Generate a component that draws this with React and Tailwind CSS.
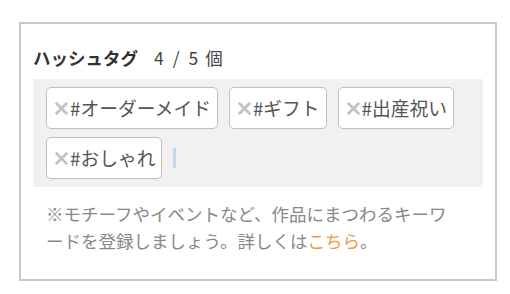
import React from "react";

const font = { fontFamily: '"Noto Sans CJK JP", "Noto Sans", sans-serif' };

function XIcon() {
  return (
    <svg width="13" height="13" viewBox="0 0 13 13" className="shrink-0">
      <path d="M0.8 0.8 L12.2 12.2 M12.2 0.8 L0.8 12.2" stroke="#c2c2c2" strokeWidth="2.8" strokeLinecap="butt" />
    </svg>
  );
}

function Tag({ label }) {
  return (
    <div className="h-[42px] pl-[8px] pr-[6px] flex items-center border border-[#bfbfbf] rounded-[5px] bg-white text-[18.75px] text-[#555] leading-none">
      <XIcon />
      <span className="ml-[2px]">{label}</span>
    </div>
  );
}

export default function App() {
  const tags = ["#オーダーメイド", "#ギフト", "#出産祝い", "#おしゃれ"];
  return (
    <div className="bg-white w-[510px] h-[294px] pt-[22px] pl-[19px]" style={font}>
      <div className="w-[478px] h-[259px] border-2 border-[#c8c8c8] px-[12px] pt-[22px]">
        <div className="flex items-center h-[24px] text-[17.5px] leading-[24px]">
          <span className="font-bold text-[#333]">ハッシュタグ</span>
          <span className="ml-[16px] text-[#444]">4</span>
          <span className="ml-[9px] text-[#444]">/</span>
          <span className="ml-[9px] text-[#444]">5</span>
          <span className="ml-[7px] text-[#444]">個</span>
        </div>
        <div className="mt-[9px] bg-[#f2f1ef] px-[13px] py-[8px] flex flex-wrap items-center gap-x-[11px] gap-y-[8px]">
          {tags.map((t) => (
            <Tag key={t} label={t} />
          ))}
          <div className="w-[3px] h-[20px] bg-[#c4d8f0]" />
        </div>
        <p className="mt-[13px] pl-[13px] w-[424px] text-[17.5px] leading-[27px] text-[#888]">
          ※モチーフやイベントなど、作品にまつわるキーワードを登録しましょう。詳しくは
          <span className="text-[#ef9a3a]">こちら</span>。
        </p>
      </div>
    </div>
  );
}
